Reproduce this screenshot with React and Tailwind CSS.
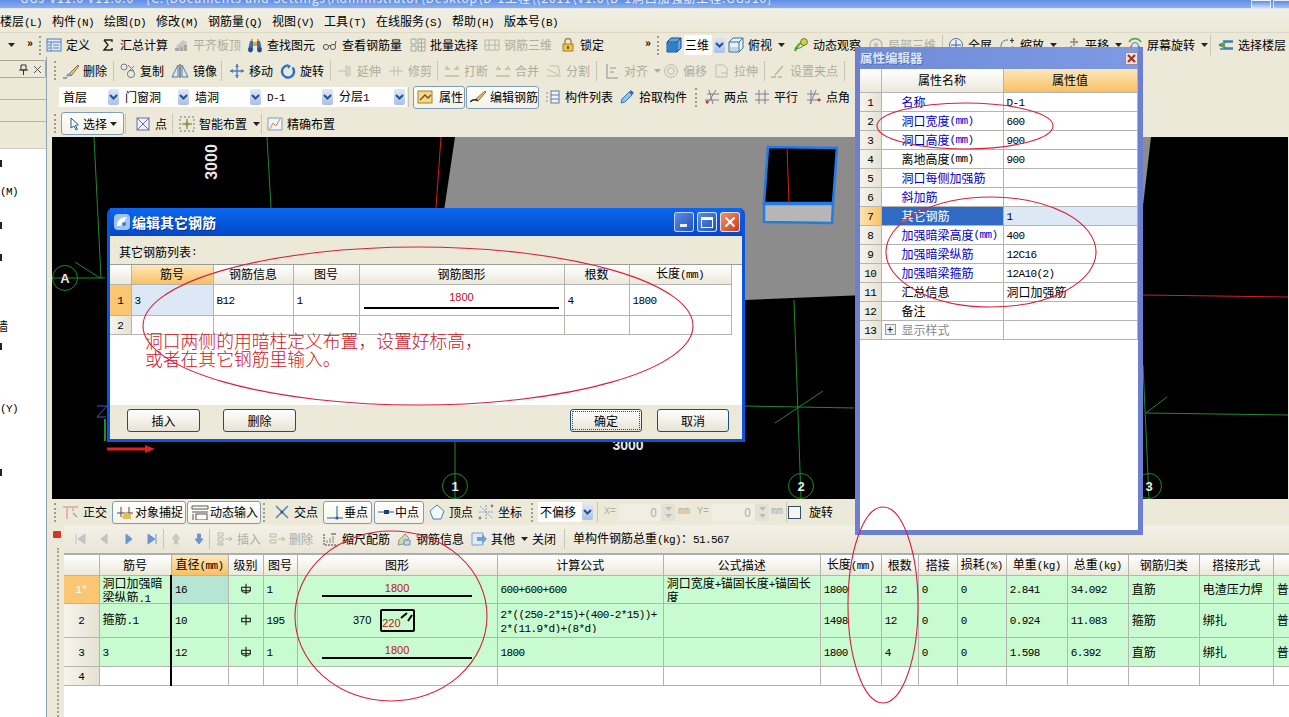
import React from "react";

const T = ({ t }) => (
  <>
    {String(t)
      .split(/([\x00-\x7f]+)/)
      .filter(Boolean)
      .map((p, i) =>
        /^[\x00-\x7f]+$/.test(p) ? (
          <span key={i} className="font-['Liberation_Mono',monospace] text-[11px] tracking-[-0.6px]">
            {p}
          </span>
        ) : (
          <span key={i}>{p}</span>
        )
      )}
  </>
);

const S = ({ children, w = 16, h = 16 }) => (
  <svg width={w} height={h} viewBox={`0 0 ${w} ${h}`} fill="none" className="shrink-0">
    {children}
  </svg>
);

const Icons = {
  define: (
    <S>
      <rect x="1" y="2" width="14" height="12" fill="#dfe9f7" stroke="#4f7fb8" />
      <path d="M1 5h14M5 5v9M7 8h6M7 11h6M2 8h2M2 11h2" stroke="#4f7fb8" />
    </S>
  ),
  sigma: (
    <S>
      <path d="M4 3h8v2M12 13H4l4-5-4-5M4 13h8v-2" stroke="#222" strokeWidth="1.4" />
    </S>
  ),
  align: (
    <S>
      <path d="M3 9l7-6 4 2-2 9H4z" fill="#c9c9c3" />
      <path d="M2 14h4v-3H2zM7 14h3v-4H7zM11 14h3V8h-3z" fill="#a7a7a0" />
    </S>
  ),
  binoc: (
    <S>
      <path d="M1 13l2-9h3v9zM15 13l-2-9h-3v9z" fill="#3d6fb0" />
      <rect x="6" y="5" width="4" height="4" fill="#e6a52c" />
      <circle cx="3.5" cy="13" r="2.4" fill="#274f87" />
      <circle cx="12.5" cy="13" r="2.4" fill="#274f87" />
      <path d="M4 2h2v2H4zM10 2h2v2h-2z" fill="#e6a52c" />
    </S>
  ),
  glasses: (
    <S>
      <circle cx="4" cy="10" r="2.6" stroke="#555" />
      <circle cx="11" cy="10" r="2.6" stroke="#555" />
      <path d="M6.5 9.5L8 8l1 1M13 8l1-4" stroke="#555" />
    </S>
  ),
  batch: (
    <S>
      <path d="M1 2h5v5H1zM1 9h5v5H1zM8 2h7v12H8zM8 6h7M8 10h7M11.5 2v12" stroke="#a3a89f" />
    </S>
  ),
  rebar3: (
    <S>
      <path d="M1 3h14v10H1zM1 8h14M5 3v10M11 3v10" stroke="#b4b6ac" />
    </S>
  ),
  lock: (
    <S>
      <path d="M5 7V4.5a3 3 0 016 0V7" stroke="#9a8a55" strokeWidth="1.4" />
      <rect x="3" y="7" width="10" height="7" fill="#efc24c" stroke="#a5812c" />
      <rect x="7" y="9" width="2" height="3" fill="#7a5b12" />
    </S>
  ),
  cube: (
    <S>
      <path d="M1 5l4-4h10v10l-4 4H1z" fill="#5ea7e8" stroke="#124a82" />
      <path d="M1 5h10v10M11 5l4-4" stroke="#124a82" />
      <path d="M2 6h8v8H2z" fill="#2f7fcb" />
    </S>
  ),
  cubeTop: (
    <S>
      <path d="M1 5l4-4h10v10l-4 4H1z" fill="#e8f1f8" stroke="#366f93" />
      <path d="M1 5h10v10M11 5l4-4" stroke="#366f93" />
      <path d="M2 10h8v4H2z" fill="#bcd7ec" />
    </S>
  ),
  orbit: (
    <S>
      <path d="M2 14c2-6 6-9 11-11" stroke="#68a82d" strokeWidth="2.4" />
      <circle cx="11" cy="5" r="3.4" fill="#d8cc48" stroke="#6e7d22" />
      <path d="M2 11c3 1 6 0 9-3" stroke="#2c7f2c" />
    </S>
  ),
  part3: (
    <S>
      <circle cx="8" cy="8" r="6" stroke="#b8b8ae" strokeWidth="1.4" />
      <circle cx="8" cy="8" r="2.4" fill="#c6c6bc" />
    </S>
  ),
  full: (
    <S>
      <circle cx="8" cy="8" r="6.5" fill="#e8eff8" stroke="#5c7691" />
      <path d="M8 3v10M3 8h10" stroke="#43607c" />
    </S>
  ),
  zoom: (
    <S>
      <path d="M13 9a6 6 0 11-5-6" stroke="#5c7691" />
      <path d="M12 1v5M10 3.5h4" stroke="#333" />
    </S>
  ),
  pan: (
    <S>
      <path d="M9 1v8M5 5h8M1 14l6-5" stroke="#8b8b80" strokeWidth="1.4" />
      <path d="M9 1L7.5 3h3zM13 5l-2-1.5v3z" fill="#8b8b80" />
    </S>
  ),
  rotate: (
    <S>
      <path d="M2 12a7 7 0 0112 0" stroke="#c44" strokeWidth="1.6" />
      <path d="M2 5a7 7 0 0112 0" stroke="#5ca64a" strokeWidth="1.6" />
      <circle cx="8" cy="9" r="3.5" fill="#dfe9f5" stroke="#4f7fb8" />
    </S>
  ),
  floors: (
    <S>
      <path d="M1 8l7-3h7M1 8l7 3h7M2 12h13M5 4h10" stroke="#3c7fb0" strokeWidth="1.4" />
      <path d="M2 8l5-3v6z" fill="#5ca64a" />
    </S>
  ),
  brush: (
    <S>
      <path d="M6 11L15 2l1 1-8 10z" fill="#e9c78a" stroke="#8a6d3c" />
      <path d="M3 13c1-3 3-3 5-2-1 3-3 3-5 2z" fill="#7d9bc9" />
      <path d="M0 15h4" stroke="#555" />
    </S>
  ),
  copy: (
    <S>
      <circle cx="4" cy="4" r="3" stroke="#6e7f92" />
      <circle cx="11" cy="11" r="3.6" stroke="#6e7f92" />
      <path d="M8 2l6 6M14 3l-5 5" stroke="#6e7f92" />
    </S>
  ),
  mirror: (
    <S w={18}>
      <path d="M1 14L7 2v12zM17 14L11 2v12z" fill="#dfe8f3" stroke="#4a7aa8" />
      <path d="M9 1v14" stroke="#333" />
    </S>
  ),
  move: (
    <S>
      <path d="M8 1v14M1 8h14" stroke="#4f7fb8" strokeWidth="1.4" />
      <path d="M8 1L6 4h4zM8 15l-2-3h4zM1 8l3-2v4zM15 8l-3-2v4z" fill="#4f7fb8" />
    </S>
  ),
  turn: (
    <S>
      <path d="M12.5 4.5a6 6 0 11-5-2" stroke="#2f6fc4" strokeWidth="2.4" />
      <path d="M7 1l4 2-3 3z" fill="#2f6fc4" />
    </S>
  ),
  extend: (
    <S>
      <path d="M1 8h8M9 3h2v10H9zM13 3v10" stroke="#bdbdb1" />
    </S>
  ),
  trim: (
    <S>
      <path d="M1 8h14M6 3v10M10 3v10" stroke="#bdbdb1" />
    </S>
  ),
  breakI: (
    <S>
      <path d="M1 6h5M10 6h5M1 13h14M3 3v3M13 3v3" stroke="#bdbdb1" strokeWidth="1.4" />
    </S>
  ),
  split: (
    <S>
      <path d="M1 13h14M1 6l12 6M4 3h8l2 8" stroke="#bdbdb1" />
    </S>
  ),
  alignL: (
    <S>
      <path d="M3 1v14h11M6 5h6M6 9h4" stroke="#b1b1a6" strokeWidth="1.6" />
    </S>
  ),
  offset: (
    <S>
      <circle cx="8" cy="8" r="6.4" stroke="#b8b8ae" />
      <circle cx="8" cy="8" r="3.4" stroke="#b8b8ae" />
    </S>
  ),
  stretch: (
    <S>
      <path d="M2 2h8l3 3v9H2zM7 10h6" stroke="#bcbcb0" />
    </S>
  ),
  grip: (
    <S>
      <path d="M1 14h5M8 14h4M5 12L13 3" stroke="#b4b4a8" strokeWidth="1.4" />
    </S>
  ),
  prop: (
    <S>
      <rect x="1" y="2" width="14" height="12" fill="#f5d98a" stroke="#a5812c" />
      <path d="M3 11l5-5 3 3 3-3" stroke="#7a4b12" strokeWidth="1.4" />
    </S>
  ),
  edit: (
    <S>
      <path d="M6 10L15 2l1 1-8 9z" fill="#e6c07c" stroke="#8a6d3c" />
      <path d="M0 13c2-2 5-3 8-1" stroke="#222" strokeWidth="1.4" />
    </S>
  ),
  list: (
    <S>
      <path d="M1 3h2v2H1zM1 7h2v2H1zM1 11h2v2H1z" fill="#bbb" />
      <rect x="6" y="2" width="8" height="12" fill="#eef3fa" stroke="#5f7f9e" />
      <path d="M6 6h8M6 10h8" stroke="#5f7f9e" />
    </S>
  ),
  pick: (
    <S>
      <path d="M2 14l1-4 7-7 3 3-7 7z" fill="#8ec3ea" stroke="#3b78ad" />
      <path d="M10 3l2-2 3 3-2 2z" fill="#3b6fa5" />
    </S>
  ),
  twoPt: (
    <S>
      <path d="M1 11h14M3 5h12M5 1l4 14M12 1L3 15" stroke="#7f7f90" />
      <circle cx="3" cy="13" r="1.4" fill="#c33" />
    </S>
  ),
  parallel: (
    <S>
      <path d="M1 5h14M1 11h14M5 1v14M11 1v14" stroke="#7f7f98" />
    </S>
  ),
  angle: (
    <S>
      <path d="M1 11h14M1 5h12M5 1v14M10 1L4 15" stroke="#7f7f98" />
      <circle cx="13" cy="11" r="1.4" fill="#c33" />
    </S>
  ),
  cursor: (
    <S>
      <path d="M5 2v10l3-2 2 4 1.4-.8-2-3.8 3-.6z" fill="#fff" stroke="#27588a" />
    </S>
  ),
  pointX: (
    <S>
      <rect x="2" y="2" width="12" height="12" fill="#f0eef8" stroke="#6b6fa8" />
      <path d="M2 2l12 12M14 2L2 14" stroke="#6b6fa8" />
    </S>
  ),
  smart: (
    <S>
      <path d="M1 1h14v14H1z" stroke="#777" strokeDasharray="2 2" />
      <path d="M8 3v10M3 8h10" stroke="#2e7d32" />
      <circle cx="8" cy="8" r="2" fill="#bb8a2e" />
    </S>
  ),
  exact: (
    <S>
      <path d="M1 2h14v12H1z" fill="#eef4fb" stroke="#8a9bad" />
      <path d="M3 13l3-6 3 3 4-7" stroke="#d9824a" />
    </S>
  ),
  ortho: (
    <S w={18}>
      <path d="M1 3h15M5 3v12M11 3v4" stroke="#dcb8b0" strokeWidth="2" />
      <path d="M11 9l4 4" stroke="#9aa6b3" strokeWidth="1.4" />
    </S>
  ),
  snap: (
    <S w={18}>
      <path d="M1 9h16M5 3v10M13 3v10" stroke="#55483a" />
      <path d="M6 13l3-5 6 2v5H7z" fill="#e2be62" />
    </S>
  ),
  dyn: (
    <S w={18}>
      <path d="M1 2h16v3H1zM1 8h16" stroke="#555" />
      <rect x="5" y="10" width="11" height="6" fill="#fff" stroke="#555" />
      <path d="M2 10v6" stroke="#555" />
    </S>
  ),
  cross: (
    <S>
      <path d="M2 2l12 12M14 2L2 14" stroke="#5f82a6" strokeWidth="1.5" />
      <circle cx="8" cy="8" r="1.6" fill="#2a5f96" />
    </S>
  ),
  perp: (
    <S>
      <path d="M0 14h16M10 2v12" stroke="#2a5f96" />
      <circle cx="10" cy="14" r="1.6" fill="#2a5f96" />
    </S>
  ),
  mid: (
    <S>
      <path d="M0 8h16" stroke="#2a5f96" />
      <rect x="6" y="6" width="5" height="4" fill="#1c3f73" />
    </S>
  ),
  vertex: (
    <S>
      <path d="M8 1l7 6-3 8H4L1 7z" fill="#f2f7fc" stroke="#4a7fb5" />
    </S>
  ),
  coord: (
    <S>
      <path d="M8 1v14M1 8h14M2 2l12 12" stroke="#7aa0c4" strokeDasharray="2 1" />
      <circle cx="2" cy="14" r="1.4" fill="#888" />
      <circle cx="14" cy="2" r="1.4" fill="#888" />
    </S>
  ),
  ruler: (
    <S>
      <path d="M2 3v11h12" stroke="#444" strokeDasharray="2 1" />
      <path d="M5 12V9M8 12V7M11 12V5" stroke="#888" />
      <path d="M9 3h5" stroke="#444" />
    </S>
  ),
  info: (
    <S>
      <path d="M2 14l1-5 6-6 4 4-6 6z" fill="#cfd7b9" stroke="#8d9a80" />
      <path d="M8 9h6v5H8z" fill="#c2d7ee" stroke="#6c8fb2" />
    </S>
  ),
  other: (
    <S>
      <path d="M1 2h11v12H1z" fill="#dfeaf7" stroke="#7fa2c6" />
      <path d="M6 6h5V3l5 5-5 5v-3H6z" fill="#6ea0d6" />
    </S>
  ),
  insert: (
    <S>
      <path d="M1 2h5v3H1zM1 7h5v3H1zM1 12h5v2H1zM8 8h7M12 6l3 2-3 2" stroke="#b8b8ac" />
    </S>
  ),
  remove: (
    <S>
      <path d="M1 3h6v3H1zM1 9h6v3H1zM9 8h6M13 6l3 2-3 2" stroke="#b8b8ac" />
    </S>
  ),
};

const Arrow = ({ c = "#222" }) => (
  <svg width="7" height="4" viewBox="0 0 7 4" className="shrink-0">
    <path d="M0 0h7L3.5 4z" fill={c} />
  </svg>
);

const ComboArrow = () => (
  <div className="w-[11px] h-[16px] shrink-0 rounded-[2px] bg-linear-to-b from-[#dfe8f8] to-[#a9bfe8] flex items-center justify-center">
    <svg width="9" height="7" viewBox="0 0 9 7">
      <path d="M1 1l3.5 3.5L8 1" stroke="#2b4f8e" strokeWidth="2" fill="none" />
    </svg>
  </div>
);

const Grip = ({ w, cn = "" }) => (
  <div className={`${w} h-full shrink-0 flex items-center ${cn}`}>
    <div className="w-[2px] h-[19px] border-l-2 border-dotted border-[#9c9a88] ml-[2px]" />
  </div>
);

const Sep = ({ w }) => (
  <div className={`${w} h-[20px] shrink-0`}>
    <div className="w-px h-full bg-[#c9c6b4] ml-px" />
  </div>
);

const Item = ({ w, icon, text, dis, arrow, btn, cn = "" }) => (
  <div
    className={`${w} shrink-0 flex items-center gap-1 whitespace-nowrap ${
      dis ? "text-[#aeac9e]" : "text-black"
    } ${btn ? "h-[23px] rounded-[3px] border border-[#7f9db9] bg-linear-to-b from-white to-[#f4f2e8] pl-[3px]" : "h-full"} ${cn}`}
  >
    {icon && Icons[icon]}
    {text && (
      <span>
        <T t={text} />
      </span>
    )}
    {arrow && <span className="ml-[2px]"><Arrow c={dis ? "#aaa" : "#222"} /></span>}
  </div>
);

const Combo = ({ w, text }) => (
  <div className={`${w} shrink-0 flex items-center h-full`}>
    <div className="flex-1 h-[20px] bg-white flex items-center justify-between pl-[4px] pr-[2px]">
      <span className="whitespace-nowrap">
        <T t={text} />
      </span>
      <ComboArrow />
    </div>
  </div>
);

const Bar = ({ children, h, cn = "" }) => (
  <div className={`${h} flex items-center shrink-0 bg-[#ece9d9] overflow-hidden ${cn}`}>{children}</div>
);

const menus = [
  ["楼层(L)", "w-[52px]"],
  ["构件(N)", "w-[52px]"],
  ["绘图(D)", "w-[52px]"],
  ["修改(M)", "w-[52px]"],
  ["钢筋量(Q)", "w-[64px]"],
  ["视图(V)", "w-[52px]"],
  ["工具(T)", "w-[52px]"],
  ["在线服务(S)", "w-[76px]"],
  ["帮助(H)", "w-[52px]"],
  ["版本号(B)", "w-[64px]"],
];

const Cell = ({ children, cn = "", as: As = "td" }) => (
  <As className={`border-r border-b border-[#b4b4b0] p-0 font-normal align-middle overflow-hidden ${cn}`}>{children}</As>
);

const HCell = ({ t, sel }) => (
  <Cell
    as="th"
    cn={
      sel
        ? "text-center bg-linear-to-b from-[#fde7bb] to-[#f7c062]"
        : "text-center bg-linear-to-b from-white to-[#ebe8da]"
    }
  >
    <T t={t} />
  </Cell>
);

const RowNo = ({ n, cn = "" }) => (
  <Cell cn={`text-center bg-linear-to-r from-[#f6f4ec] to-[#e5e1d4] ${cn}`}>
    <T t={n} />
  </Cell>
);

const Tx = ({ t, cn = "" }) => (
  <div className={`pl-[3px] leading-[12px] ${cn}`}>
    <T t={t} />
  </div>
);

const Shape = ({ barW, gap }) => (
  <div className="flex flex-col items-center">
    <span className="font-['Liberation_Sans',sans-serif] text-[11px] leading-[13px] text-[#c01020]">1800</span>
    <div className={`${barW} ${gap} h-[2px] bg-black`} />
  </div>
);

const DLG_COLS = ["w-[21px]", "w-[82px]", "w-[80px]", "w-[66px]", "w-[205px]", "w-[65px]", "w-[102px]"];

const DialogWin = () => (
  <div className="absolute left-[107px] top-[208px] w-[638px] h-[234px] rounded-t-[6px] bg-[#0a55e0] p-[3px] pt-0 flex flex-col">
    <div className="h-[28px] shrink-0 flex items-center pl-[3px] pr-[2px] bg-linear-to-b from-[#0d66ee] via-[#0558dd] to-[#0448c8]">
      <svg width="18" height="18" viewBox="0 0 18 18" className="shrink-0">
        <rect x="1" y="1" width="16" height="16" rx="4" fill="#9fc4ef" />
        <path d="M4 13c0-6 4-9 10-9-2 2-2 5-4 7s-4 2-6 2z" fill="#fff" />
        <circle cx="11" cy="11" r="2" fill="#3f7fc7" />
      </svg>
      <span className="ml-[1px] text-[14px] font-bold text-white [text-shadow:1px_1px_0_#0a2f84]">编辑其它钢筋</span>
      <div className="ml-auto flex gap-[3px]">
        <div className="w-[20px] h-[20px] rounded-[3px] border border-white/70 bg-linear-to-br from-[#5b8cea] to-[#2450b8] flex items-end pl-[5px] pb-[4px]">
          <div className="w-[7px] h-[3px] bg-white/90" />
        </div>
        <div className="w-[20px] h-[20px] rounded-[3px] border border-white/80 bg-linear-to-br from-[#5b8cea] to-[#2450b8] flex items-center justify-center">
          <div className="w-[12px] h-[11px] border border-t-[3px] border-white" />
        </div>
        <div className="w-[20px] h-[20px] rounded-[3px] border border-white/80 bg-linear-to-br from-[#ee9070] to-[#c73a12] flex items-center justify-center">
          <svg width="12" height="12" viewBox="0 0 12 12">
            <path d="M1.5 1.5l9 9M10.5 1.5l-9 9" stroke="#fff" strokeWidth="2" />
          </svg>
        </div>
      </div>
    </div>
    <div className="flex-1 flex flex-col bg-white min-h-0">
      <div className="h-[29px] shrink-0 bg-[#ece9d9] flex items-center pl-[9px] pt-[4px] border-b border-[#9a9a96]">
        <T t="其它钢筋列表:" />
      </div>
      <div className="h-[140px] shrink-0 bg-white overflow-hidden">
        <table className="table-fixed border-collapse w-[621px]">
          <colgroup>
            {DLG_COLS.map((c, i) => (
              <col key={i} className={c} />
            ))}
          </colgroup>
          <tbody>
            <tr className="h-[19px]">
              <HCell t="" />
              <HCell t="筋号" sel />
              <HCell t="钢筋信息" />
              <HCell t="图号" />
              <HCell t="钢筋图形" />
              <HCell t="根数" />
              <HCell t="长度(mm)" />
            </tr>
            <tr className="h-[31px]">
              <Cell cn="text-center bg-[#fbc672]"><T t="1" /></Cell>
              <Cell cn="bg-[#dde8f6]"><Tx t="3" /></Cell>
              <Cell><Tx t="B12" /></Cell>
              <Cell><Tx t="1" /></Cell>
              <Cell><Shape barW="w-[195px]" gap="mt-[3px]" /></Cell>
              <Cell><Tx t="4" /></Cell>
              <Cell><Tx t="1800" /></Cell>
            </tr>
            <tr className="h-[19px]">
              <RowNo n="2" />
              <Cell />
              <Cell />
              <Cell />
              <Cell />
              <Cell />
              <Cell />
            </tr>
          </tbody>
        </table>
        <div className="pl-[35px] mt-[-4px] text-[17.8px] leading-[18px] text-[#d0141e] font-light whitespace-nowrap">
          <div>洞口两侧的用暗柱定义布置，设置好标高，</div>
          <div>或者在其它钢筋里输入。</div>
        </div>
      </div>
      <div className="flex-1 bg-[#ece9d9] flex items-center pl-[17px] pr-[13px] pb-[3px] gap-[23px]">
        <Btn t="插入" w="w-[73px]" />
        <Btn t="删除" w="w-[73px]" />
        <Btn t="确定" w="w-[72px] ml-auto outline outline-1 -outline-offset-3 outline-dotted outline-[#444]" />
        <Btn t="取消" w="w-[72px] -ml-[8px]" />
      </div>
    </div>
  </div>
);

const Btn = ({ t, w }) => (
  <div className={`${w} h-[23px] rounded-[3px] border border-[#1c4f7f] bg-linear-to-b from-white to-[#e6e3d6] flex items-center justify-center text-black`}>
    {t}
  </div>
);

const props = [
  ["名称", "D-1", "b"],
  ["洞口宽度(mm)", "600", "b"],
  ["洞口高度(mm)", "900", "b"],
  ["离地高度(mm)", "900", "k"],
  ["洞口每侧加强筋", "", "b"],
  ["斜加筋", "", "b"],
  ["其它钢筋", "1", "s"],
  ["加强暗梁高度(mm)", "400", "b"],
  ["加强暗梁纵筋", "12C16", "b"],
  ["加强暗梁箍筋", "12A10(2)", "b"],
  ["汇总信息", "洞口加强筋", "k"],
  ["备注", "", "k"],
  ["显示样式", "", "g"],
];

const PropertyPanel = () => (
  <div className="absolute left-[855px] top-[47px] w-[288px] h-[488px] bg-[#6d7fd2] px-[5px] pb-[5px] flex flex-col">
    <div className="h-[22px] shrink-0 flex items-center justify-between bg-linear-to-r from-[#6f8ad8] to-[#7f9ae4]">
      <span className="text-[12.5px] font-bold text-[#dbe5f8] [text-shadow:1px_1px_0_#5670b8]">属性编辑器</span>
      <div className="w-[13px] h-[13px] bg-[#e8e4d8] border border-[#8f8fa8] flex items-center justify-center">
        <svg width="9" height="9" viewBox="0 0 9 9">
          <path d="M1 1l7 7M8 1L1 8" stroke="#a92b2b" strokeWidth="2" />
        </svg>
      </div>
    </div>
    <div className="flex-1 bg-white overflow-hidden">
      <table className="table-fixed border-collapse w-[277px]">
        <colgroup>
          <col className="w-[21px]" />
          <col className="w-[122px]" />
          <col className="w-[134px]" />
        </colgroup>
        <tbody>
          <tr className="h-[23px]">
            <HCell t="" />
            <HCell t="属性名称" />
            <HCell t="属性值" sel />
          </tr>
          {props.map((p, i) => (
            <tr key={i} className="h-[19px]">
              <RowNo n={i + 1} cn={p[2] === "s" ? "from-[#fde3ae]! to-[#f8c268]!" : ""} />
              <Cell
                cn={
                  p[2] === "s"
                    ? "bg-[#316ac5] text-white"
                    : p[2] === "b"
                    ? "text-[#0000c8]"
                    : p[2] === "g"
                    ? "text-[#8a8a8a]"
                    : "text-black"
                }
              >
                <div className="flex items-center whitespace-nowrap">
                  {p[2] === "g" ? (
                    <div className="w-[11px] h-[11px] ml-[3px] mr-[6px] border border-[#999] bg-[#f2f0e6] flex items-center justify-center text-black text-[11px] leading-none">
                      +
                    </div>
                  ) : (
                    <div className="w-[20px]" />
                  )}
                  <T t={p[0]} />
                </div>
              </Cell>
              <Cell cn={p[2] === "s" ? "bg-[#dde8f6]" : ""}>
                <Tx t={p[1]} />
              </Cell>
            </tr>
          ))}
        </tbody>
      </table>
    </div>
  </div>
);

const COLS = [
  "w-[35px]", "w-[72px]", "w-[57px]", "w-[35px]", "w-[34px]", "w-[200px]", "w-[166px]", "w-[157px]",
  "w-[61px]", "w-[37px]", "w-[39px]", "w-[49px]", "w-[61px]", "w-[61px]", "w-[71px]", "w-[74px]", "w-[60px]",
];

const heads = ["", "筋号", "直径(mm)", "级别", "图号", "图形", "计算公式", "公式描述", "长度(mm)", "根数", "搭接", "损耗(%)", "单重(kg)", "总重(kg)", "钢筋归类", "搭接形式", "钢筋"];

const GREEN = "bg-[#c9fbd0]";

const Steel = ({ hooked }) => (
  <svg width="12" height="12" viewBox="0 0 14 14" className="mx-auto">
    <path d="M7 1v12M2 5h10v4H2z" stroke="#111" strokeWidth="1.2" fill="none" />
    {hooked && <path d="M2 9c0 3 10 3 10 0" stroke="#111" fill="none" />}
  </svg>
);

const tail = [
  ["1800", "12", "0", "0", "2.841", "34.092", "直筋", "电渣压力焊", "普"],
  ["1498", "12", "0", "0", "0.924", "11.083", "箍筋", "绑扎", "普"],
  ["1800", "4", "0", "0", "1.598", "6.392", "直筋", "绑扎", "普"],
];

const DataRow = ({ cls, h, no, name, dia, grade, fig, shape, formula, desc, t }) => (
  <tr className={h}>
    {no}
    <Cell cn={GREEN}>{name}</Cell>
    <Cell cn={`${cls} border-l-2 border-l-black`}><Tx t={dia} /></Cell>
    <Cell cn={GREEN}>{grade}</Cell>
    <Cell cn={GREEN}><Tx t={fig} /></Cell>
    <Cell cn={GREEN}>{shape}</Cell>
    <Cell cn={GREEN}>{formula}</Cell>
    <Cell cn={GREEN}>{desc}</Cell>
    {t.map((v, i) => (
      <Cell key={i} cn={GREEN}><Tx t={v} /></Cell>
    ))}
  </tr>
);

const BottomTable = () => (
  <table className="table-fixed border-collapse w-[1270px]">
    <colgroup>
      {COLS.map((c, i) => (
        <col key={i} className={c} />
      ))}
    </colgroup>
    <tbody>
      <tr className="h-[20px]">
        {heads.map((h, i) => (
          <HCell key={i} t={h} sel={i === 2} />
        ))}
      </tr>
      <DataRow
        h="h-[28px]"
        cls="bg-[#b6e5d4]"
        no={<Cell cn="text-center bg-[#fbc672] text-white"><T t="1*" /></Cell>}
        name={<Tx t="洞口加强暗 梁纵筋.1" cn="h-[25px] overflow-hidden" />}
        dia="16"
        grade={<Steel hooked />}
        fig="1"
        shape={<Shape barW="w-[150px]" gap="mt-0" />}
        formula={<Tx t="600+600+600" />}
        desc={<Tx t="洞口宽度+锚固长度+锚固长度" cn="h-[25px] overflow-hidden" />}
        t={tail[0]}
      />
      <DataRow
        h="h-[34px]"
        cls={GREEN}
        no={<RowNo n="2" />}
        name={<Tx t="箍筋.1" />}
        dia="10"
        grade={<Steel />}
        fig="195"
        shape={
          <div className="flex items-center justify-center gap-[9px] pr-[26px]">
            <span className="font-['Liberation_Sans',sans-serif] text-[11px]">370</span>
            <div className="relative w-[35px] h-[23px] border-2 border-black rounded-[2px] flex items-end">
              <span className="font-['Liberation_Sans',sans-serif] text-[11px] leading-[14px] text-[#c01020]">220</span>
              <svg width="14" height="14" viewBox="0 0 14 14" className="absolute right-0 top-0">
                <path d="M2 7l6-5M9 10l4-6" stroke="#000" strokeWidth="2" fill="none" />
              </svg>
            </div>
          </div>
        }
        formula={<Tx t="2*((250-2*15)+(400-2*15))+ 2*(11.9*d)+(8*d)" cn="h-[26px] overflow-hidden" />}
        desc={null}
        t={tail[1]}
      />
      <DataRow
        h="h-[29px]"
        cls={GREEN}
        no={<RowNo n="3" />}
        name={<Tx t="3" />}
        dia="12"
        grade={<Steel hooked />}
        fig="1"
        shape={<Shape barW="w-[150px]" gap="mt-0" />}
        formula={<Tx t="1800" />}
        desc={null}
        t={tail[2]}
      />
      <tr className="h-[19px]">
        <RowNo n="4" />
        {heads.slice(1).map((h, i) => (
          <Cell key={i} cn={i === 1 ? "border-l-2 border-l-black" : ""} />
        ))}
      </tr>
    </tbody>
  </table>
);

const Canvas = () => (
  <svg width="1236" height="362" viewBox="53 137 1236 362" className="block shrink-0 bg-black">
    <polygon points="456,137 1152,137 1135,284 745,300 430,312" fill="#8c8c8c" />
    <g stroke="#1f8a2e" fill="none">
      <path d="M95 137L102 278M53 278H106M76 262L101 278M268 137L272 208M456 442V499M795 300L802 499M745 406L855 408M776 423L824 391M1144 365L1150 499M1147 413L1289 415M1147 413L1168 397" />
      <circle cx="66" cy="278" r="12.5" />
      <circle cx="456" cy="486" r="12.5" />
      <circle cx="802" cy="486" r="12.5" />
      <circle cx="1150" cy="486" r="12.5" />
    </g>
    <path d="M442 137L437 208M1144 295L1289 297" stroke="#d02020" />
    <g fill="#e8e8e8" fontFamily="Liberation Sans, sans-serif" fontWeight="bold" textAnchor="middle">
      <text x="66" y="283" fontSize="13">A</text>
      <text x="456" y="491" fontSize="13">1</text>
      <text x="802" y="491" fontSize="13">2</text>
      <text x="1150" y="491" fontSize="13">3</text>
      <text x="629" y="450" fontSize="14">3000</text>
      <text transform="translate(218 162) rotate(-90)" fontSize="16">3000</text>
    </g>
    <polygon points="769,147 838,148 834,203 765,203" fill="#000" stroke="#1f7ce8" strokeWidth="2.5" />
    <polygon points="765,204 834,204 833,223 765,222" fill="#b6b6b6" stroke="#1f7ce8" strokeWidth="2.5" />
    <path d="M788 147L790 203" stroke="#d02020" />
    <path d="M98 406h10l-10 11h9" stroke="#3a5cc8" fill="none" />
    <path d="M106 419V441" stroke="#1fc04a" strokeWidth="1.5" />
    <path d="M108 449H147" stroke="#e02020" strokeWidth="3" />
    <path d="M146 445l10 4-10 4z" fill="#e02020" />
  </svg>
);

const Annotations = () => (
  <svg width="1289" height="717" viewBox="0 0 1289 717" fill="none" className="absolute left-0 top-0 pointer-events-none">
    <g stroke="#d8203c" strokeWidth="1.1">
      <ellipse cx="418" cy="326" rx="275" ry="79" />
      <ellipse cx="965" cy="126" rx="88" ry="23" />
      <ellipse cx="991" cy="252" rx="105" ry="55" />
      <ellipse cx="391" cy="616" rx="96" ry="85" />
      <ellipse cx="883" cy="605" rx="35" ry="98" />
    </g>
  </svg>
);

const Ticks = ({ y }) => <div className={`${y} w-[2px] h-[7px] bg-[#222]`} />;

export default function App() {
  return (
    <div className="relative w-[1289px] h-[717px] overflow-hidden bg-[#ece9d9] text-[12px] leading-[16px] text-black font-['Noto_Sans_CJK_SC','Liberation_Sans',sans-serif] flex flex-col">
      {/* title bar */}
      <div className="h-[9px] shrink-0 bg-linear-to-b from-[#5f8fe8] to-[#8eaeea] border-b border-[#dfe6f2] overflow-hidden flex justify-between">
        <span className="-mt-[10px] pl-[20px] text-[12px] tracking-[0.9px] text-[#e6ecfa] whitespace-nowrap">GGJ V11.0  V11.0.0     - [C:\Documents and Settings\Administrator\Desktop\D-1工程\(2011\V1.6\D-1洞口加强筋工程.GGJ10]</span>
        <div className="flex gap-[2px] mr-[-4px]">
          <div className="w-[20px] h-[9px] bg-linear-to-b from-[#5b8cea] to-[#cfdcf6] rounded-b-[3px] border border-white/70" />
          <div className="w-[20px] h-[9px] bg-linear-to-b from-[#5b8cea] to-[#a9c0ef] rounded-b-[3px] border border-white/70" />
        </div>
      </div>

      {/* menu */}
      <div className="h-[23px] shrink-0 flex items-center pt-[2px] bg-linear-to-b from-[#f1efe2] to-[#ece9d9] whitespace-nowrap">
        {menus.map(([m, w]) => (
          <span key={m} className={`${w} shrink-0`}>
            <T t={m} />
          </span>
        ))}
      </div>

      {/* main toolbar */}
      <Bar h="h-[25px]" cn="border-t border-[#dcd9c8]">
        <div className="w-[8px] shrink-0" />
        <div className="w-[19px] shrink-0"><Arrow /></div>
        <div className="w-[10px] shrink-0 text-[11px] font-bold leading-none mb-[5px]">»</div>
        <Grip w="w-[9px]" />
        <Item w="w-[54px]" icon="define" text="定义" />
        <Item w="w-[73px]" icon="sigma" text="汇总计算" />
        <Item w="w-[74px]" icon="align" text="平齐板顶" dis />
        <Item w="w-[75px]" icon="binoc" text="查找图元" />
        <Item w="w-[88px]" icon="glasses" text="查看钢筋量" />
        <Item w="w-[74px]" icon="batch" text="批量选择" />
        <Item w="w-[76px]" icon="rebar3" text="钢筋三维" dis />
        <Item w="w-[85px]" icon="lock" text="锁定" />
        <div className="w-[10px] shrink-0 text-[11px] font-bold leading-none mb-[5px]">»</div>
        <Grip w="w-[11px]" />
        <div className="w-[62px] shrink-0 flex items-center gap-[2px]">
          {Icons.cube}
          <span className="bg-white h-[20px] pl-[1px] pr-[3px] flex items-center">三维</span>
          <ComboArrow />
        </div>
        <Item w="w-[65px]" icon="cubeTop" text="俯视" arrow />
        <Item w="w-[75px]" icon="orbit" text="动态观察" />
        <Item w="w-[73px]" icon="part3" text="局部三维" dis />
        <Sep w="w-[7px]" />
        <Item w="w-[52px]" icon="full" text="全屏" />
        <Item w="w-[65px]" icon="zoom" text="缩放" arrow />
        <Item w="w-[62px]" icon="pan" text="平移" arrow />
        <Item w="w-[82px]" icon="rotate" text="屏幕旋转" arrow />
        <Sep w="w-[9px]" />
        <Item w="w-[70px]" icon="floors" text="选择楼层" />
      </Bar>

      {/* body */}
      <div className="flex-1 flex min-h-0">
        {/* left dock */}
        <div className="w-[47px] shrink-0 border-r border-[#8ea0b4] flex flex-col">
          <div className="h-[91px] shrink-0 bg-[#ece9d9] flex flex-col">
            <div className="h-[18px] mt-[3px] shrink-0 border border-l-0 border-[#a8a795] rounded-r-[2px] flex items-center justify-end gap-[5px] pr-[3px]">
              <svg width="9" height="11" viewBox="0 0 9 11"><path d="M2 1h5v5H2zM0 6h9M4.5 6v5" stroke="#333" fill="none" /></svg>
              <svg width="9" height="9" viewBox="0 0 9 9"><path d="M1 1l7 7M8 1L1 8" stroke="#555" /></svg>
            </div>
            <div className="h-[22px] shrink-0 border-b border-[#b5b3a2]" />
            <div className="h-[22px] shrink-0 border-b border-[#b5b3a2]" />
          </div>
          <div className="flex-1 bg-white relative border-t border-[#cfcdbd] overflow-hidden">
            <div className="pt-[11px] flex flex-col">
              <Ticks y="mb-[15px]" />
              <span className="h-[16px] whitespace-nowrap"><T t="(M)" /></span>
              <div className="h-[24px]" />
              <Ticks y="mb-[25px]" />
              <Ticks y="mb-[57px]" />
              <span className="h-[16px] -ml-[4px]">墙</span>
              <div className="h-[9px]" />
              <Ticks y="mb-[49px]" />
              <span className="h-[16px] whitespace-nowrap"><T t="(Y)" /></span>
              <div className="h-[54px]" />
              <Ticks y="" />
            </div>
          </div>
        </div>

        {/* workspace */}
        <div className="flex-1 min-w-0 pl-[5px] flex flex-col overflow-hidden">
          <Bar h="h-[27px]">
            <Grip w="w-[11px]" />
            <Item w="w-[49px]" icon="brush" text="删除" />
            <Sep w="w-[8px]" />
            <Item w="w-[51px]" icon="copy" text="复制" />
            <Item w="w-[49px]" icon="mirror" text="镜像" cn="gap-0" />
            <Sep w="w-[9px]" />
            <Item w="w-[51px]" icon="move" text="移动" />
            <Item w="w-[49px]" icon="turn" text="旋转" />
            <Sep w="w-[8px]" />
            <Item w="w-[51px]" icon="extend" text="延伸" dis />
            <Item w="w-[48px]" icon="trim" text="修剪" dis />
            <Sep w="w-[8px]" />
            <Item w="w-[51px]" icon="breakI" text="打断" dis />
            <Item w="w-[51px]" icon="breakI" text="合并" dis />
            <Item w="w-[49px]" icon="split" text="分割" dis />
            <Sep w="w-[9px]" />
            <Item w="w-[59px]" icon="alignL" text="对齐" dis arrow />
            <Item w="w-[51px]" icon="offset" text="偏移" dis />
            <Item w="w-[49px]" icon="stretch" text="拉伸" dis />
            <Sep w="w-[7px]" />
            <Item w="w-[73px]" icon="grip" text="设置夹点" dis />
            <Sep w="w-[8px]" />
          </Bar>
          <Bar h="h-[26px]">
            <div className="w-[7px] shrink-0" />
            <Combo w="w-[62px]" text="首层" />
            <Combo w="w-[70px]" text="门窗洞" />
            <Combo w="w-[72px]" text="墙洞" />
            <Combo w="w-[72px]" text="D-1" />
            <Combo w="w-[72px]" text="分层1" />
            <Sep w="w-[6px]" />
            <Item w="w-[52px]" icon="prop" text="属性" btn cn="gap-[6px]" />
            <div className="w-px shrink-0" />
            <Item w="w-[73px]" icon="edit" text="编辑钢筋" btn />
            <div className="w-[6px] shrink-0" />
            <Item w="w-[74px]" icon="list" text="构件列表" />
            <Item w="w-[74px]" icon="pick" text="拾取构件" />
            <Grip w="w-[11px]" />
            <Item w="w-[50px]" icon="twoPt" text="两点" />
            <Item w="w-[52px]" icon="parallel" text="平行" />
            <Item w="w-[52px]" icon="angle" text="点角" />
          </Bar>
          <Bar h="h-[27px]">
            <Grip w="w-[9px]" />
            <Item w="w-[63px]" icon="cursor" text="选择" arrow btn cn="gap-[1px] pl-[4px]" />
            <Sep w="w-[11px]" />
            <Item w="w-[36px]" icon="pointX" text="点" />
            <Sep w="w-[8px]" />
            <Item w="w-[81px]" icon="smart" text="智能布置" arrow />
            <Sep w="w-[7px]" />
            <Item w="w-[74px]" icon="exact" text="精确布置" />
          </Bar>

          <Canvas />

          <Bar h="h-[26px]">
            <Grip w="w-[10px]" />
            <Item w="w-[50px]" icon="ortho" text="正交" cn="gap-[3px]" />
            <Item w="w-[74px]" icon="snap" text="对象捕捉" btn cn="gap-[1px]" />
            <div className="w-px shrink-0" />
            <Item w="w-[74px]" icon="dyn" text="动态输入" btn cn="gap-[1px]" />
            <Grip w="w-[13px]" />
            <Item w="w-[49px]" icon="cross" text="交点" />
            <Item w="w-[49px]" icon="perp" text="垂点" btn cn="gap-[1px]" />
            <div className="w-[2px] shrink-0" />
            <Item w="w-[50px]" icon="mid" text="中点" btn cn="gap-[1px]" />
            <div className="w-[5px] shrink-0" />
            <Item w="w-[49px]" icon="vertex" text="顶点" />
            <Item w="w-[51px]" icon="coord" text="坐标" />
            <Grip w="w-[9px]" />
            <div className="w-[58px] shrink-0 flex items-center">
              <span className="bg-white h-[20px] w-[44px] pl-[2px] flex items-center">不偏移</span>
              <ComboArrow />
            </div>
            <Sep w="w-[8px]" />
            <div className="w-[181px] shrink-0 flex items-center text-[#b0ae9f]">
              <span className="w-[15px] font-['Liberation_Mono',monospace] text-[10px]">X=</span>
              <div className="w-[42px] h-[17px] bg-[#f0eee2] text-right pr-[4px]">0</div>
              <div className="w-[14px] h-[17px] bg-[#e4e2d4] mr-[3px] flex flex-col items-center justify-center gap-[3px]"><Arrow c="#bbb" /><Arrow c="#bbb" /></div>
              <span className="w-[19px] font-['Liberation_Mono',monospace] text-[10px]">mm</span>
              <span className="w-[15px] font-['Liberation_Mono',monospace] text-[10px]">Y=</span>
              <div className="w-[43px] h-[17px] bg-[#f0eee2] text-right pr-[4px]">0</div>
              <div className="w-[14px] h-[17px] bg-[#e4e2d4] mr-[2px] flex flex-col items-center justify-center gap-[3px]"><Arrow c="#bbb" /><Arrow c="#bbb" /></div>
              <span className="font-['Liberation_Mono',monospace] text-[10px]">mm</span>
            </div>
            <Sep w="w-[3px]" />
            <div className="w-[13px] h-[13px] shrink-0 border border-[#34506e] bg-[#f6f5ee]" />
            <span className="ml-[8px]">旋转</span>
          </Bar>

          <div className="flex-1 flex min-h-0">
            <div className="w-[12px] shrink-0 flex flex-col items-start bg-[#ece9d9]">
              <div className="w-[8px] h-[7px] mt-[6px] ml-[1px] rounded-[1px] bg-[#d0362a]" />
              <div className="flex-1 w-[2px] ml-[5px] mt-[10px] border-l-2 border-dotted border-[#a5a391]" />
            </div>
            <div className="flex-1 min-w-0 flex flex-col">
              <Bar h="h-[28px]" cn="pl-[2px] bg-linear-to-b from-[#f3f1e7] to-[#e9e6d6]">
                <div className="w-[8px] shrink-0" />
                <div className="w-[24px] shrink-0"><Nav d="M2 2v10M11 2v10L4 7z" c="#c2c4c4" /></div>
                <div className="w-[24px] shrink-0"><Nav d="M9 2v10L3 7z" c="#c2c4c4" /></div>
                <div className="w-[24px] shrink-0"><Nav d="M4 2v10l6-5z" c="#6d94d8" /></div>
                <div className="w-[16px] shrink-0"><Nav d="M2 2v10l7-5zM10 2v10" c="#6d94d8" /></div>
                <Sep w="w-[8px]" />
                <div className="w-[23px] shrink-0"><Nav d="M6 2L2 7h2.5v5h3V7H10z" c="#c8c8c0" /></div>
                <div className="w-[15px] shrink-0"><Nav d="M6 12L2 7h2.5V2h3v5H10z" c="#6d94d8" /></div>
                <Sep w="w-[9px]" />
                <Item w="w-[52px]" icon="insert" text="插入" dis />
                <Item w="w-[53px]" icon="remove" text="删除" dis />
                <Item w="w-[74px]" icon="ruler" text="缩尺配筋" />
                <Item w="w-[75px]" icon="info" text="钢筋信息" />
                <Item w="w-[61px]" icon="other" text="其他" arrow />
                <span className="w-[31px] shrink-0">关闭</span>
                <Sep w="w-[10px]" />
                <span className="whitespace-nowrap"><T t="单构件钢筋总重(kg)：51.567" /></span>
              </Bar>
              <div className="flex-1 bg-white border-t-2 border-[#a9b0b4] overflow-hidden">
                <BottomTable />
              </div>
            </div>
          </div>
        </div>
      </div>

      <DialogWin />
      <PropertyPanel />
      <Annotations />
    </div>
  );
}

function Nav({ d, c }) {
  return (
    <svg width="12" height="14" viewBox="0 0 12 14" className="shrink-0">
      <path d={d} fill={c} stroke={c} />
    </svg>
  );
}
